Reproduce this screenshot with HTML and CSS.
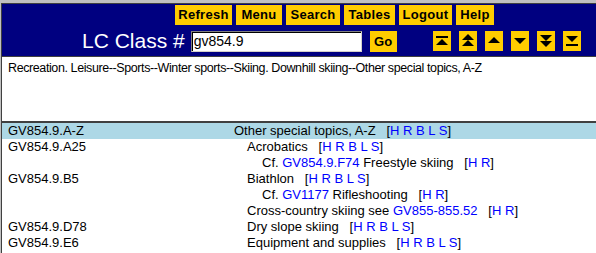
FILE: index.html
```html
<!DOCTYPE html>
<html lang="en">
<head>
    <meta charset="UTF-8">
    <title>LC Class</title>
    <link rel="stylesheet" href="styles.css">
</head>
<body>
    <div class="frame nav-frame">
        <div class="menu-row">
            <span class="btn">Refresh</span>
            <span class="btn">Menu</span>
            <span class="btn">Search</span>
            <span class="btn">Tables</span>
            <span class="btn">Logout</span>
            <span class="btn">Help</span>
        </div>
        <div class="search-row">
            <span class="label">LC Class #</span>
            <input class="class-input" value="gv854.9">
            <span class="btn go">Go</span>
            <div class="arrows">
                <span class="arrow">
                    <svg width="18" height="20" viewBox="0 0 18 20"><rect x="3" y="5" width="12" height="2"/><polygon points="9,8 15,14 3,14"/></svg>
                </span>
                <span class="arrow">
                    <svg width="18" height="20" viewBox="0 0 18 20"><polygon points="9,3 15,9 3,9"/><polygon points="9,9 15,15 3,15"/></svg>
                </span>
                <span class="arrow">
                    <svg width="18" height="20" viewBox="0 0 18 20"><polygon points="9,6 15,12 3,12"/></svg>
                </span>
                <span class="arrow">
                    <svg width="18" height="20" viewBox="0 0 18 20"><polygon points="3,7 15,7 9,13"/></svg>
                </span>
                <span class="arrow">
                    <svg width="18" height="20" viewBox="0 0 18 20"><polygon points="3,4 15,4 9,10"/><polygon points="3,10 15,10 9,16"/></svg>
                </span>
                <span class="arrow">
                    <svg width="18" height="20" viewBox="0 0 18 20"><polygon points="3,5 15,5 9,11"/><rect x="3" y="13" width="12" height="2"/></svg>
                </span>
            </div>
        </div>
    </div>

    <div class="frame caption-frame">
        Recreation. Leisure--Sports--Winter sports--Skiing. Downhill skiing--Other special topics, A-Z
    </div>

    <div class="frame list-frame">
        <div class="row current">
            <span class="num">GV854.9.A-Z</span>
            <span class="desc">Other special topics, A-Z&nbsp;&nbsp;&nbsp;[<a>H R B L S</a>]</span>
        </div>
        <div class="row">
            <span class="num">GV854.9.A25</span>
            <span class="desc lvl1">Acrobatics&nbsp;&nbsp;&nbsp;[<a>H R B L S</a>]</span>
        </div>
        <div class="row">
            <span class="num"></span>
            <span class="desc lvl2">Cf. <a>GV854.9.F74</a> Freestyle skiing&nbsp;&nbsp;&nbsp;[<a>H R</a>]</span>
        </div>
        <div class="row">
            <span class="num">GV854.9.B5</span>
            <span class="desc lvl1">Biathlon&nbsp;&nbsp;&nbsp;[<a>H R B L S</a>]</span>
        </div>
        <div class="row">
            <span class="num"></span>
            <span class="desc lvl2">Cf. <a>GV1177</a> Rifleshooting&nbsp;&nbsp;&nbsp;[<a>H R</a>]</span>
        </div>
        <div class="row">
            <span class="num"></span>
            <span class="desc lvl1">Cross-country skiing see <a>GV855-855.52</a>&nbsp;&nbsp;&nbsp;[<a>H R</a>]</span>
        </div>
        <div class="row">
            <span class="num">GV854.9.D78</span>
            <span class="desc lvl1">Dry slope skiing&nbsp;&nbsp;&nbsp;[<a>H R B L S</a>]</span>
        </div>
        <div class="row">
            <span class="num">GV854.9.E6</span>
            <span class="desc lvl1">Equipment and supplies&nbsp;&nbsp;&nbsp;[<a>H R B L S</a>]</span>
        </div>
    </div>
</body>
</html>
```

FILE: styles.css
```css
body {
    margin: 0;
    padding: 3px 0 0 1px;
    background-color: #c0c0c0;
    font-family: "Liberation Sans", Arial, sans-serif;
    font-size: 13px;
    overflow: hidden;
}

.frame {
    border-top: 1px solid #404040;
    border-left: 1px solid #404040;
}

.nav-frame {
    background-color: #000080;
    height: 52px;
}

.menu-row {
    display: grid;
    grid-template-columns: 57px 46px 54px 51px 53px 38px;
    gap: 4px;
    padding: 1px 0 0 173px;
}

.btn {
    background-color: #ffcc00;
    color: black;
    font-weight: bold;
    font-size: 13px;
    height: 20px;
    line-height: 20px;
    text-align: center;
    letter-spacing: 0.3px;
}

.search-row {
    display: flex;
    align-items: center;
    margin-top: 4px;
    padding-left: 80px;
}

.label {
    color: white;
    font-size: 21px;
    margin-right: 6px;
}

.class-input {
    width: 171px;
    height: 21px;
    box-sizing: border-box;
    margin: 0 8px 0 0;
    padding: 0 2px;
    font-family: "Liberation Sans", Arial, sans-serif;
    font-size: 14px;
    border: 1px solid;
    border-color: #808080 #d4d0c8 #d4d0c8 #808080;
    box-shadow: inset 1px 1px 0 #000;
    background: white;
}

.go {
    height: 21px;
    line-height: 21px;
    width: 27px;
}

.arrows {
    display: flex;
    gap: 8px;
    margin-left: 36px;
}

.arrow {
    display: block;
    width: 18px;
    height: 20px;
    background-color: #ffcc00;
}

.arrow svg {
    display: block;
    fill: #000;
}

.caption-frame {
    background: white;
    height: 60px;
    padding: 4px 0 0 6px;
    font-size: 12.5px;
    letter-spacing: -0.4px;
}

.list-frame {
    background: white;
    border-top: 2px solid #404040;
    height: 140px;
}

.row {
    display: flex;
    height: 16px;
    line-height: 16px;
    padding-left: 6px;
    white-space: nowrap;
}

.row.current {
    background-color: #add8e6;
}

.num {
    width: 226px;
    flex: none;
}

.lvl1 {
    padding-left: 13px;
}

.lvl2 {
    padding-left: 28px;
}

a {
    color: #0000ff;
    text-decoration: none;
}
```
